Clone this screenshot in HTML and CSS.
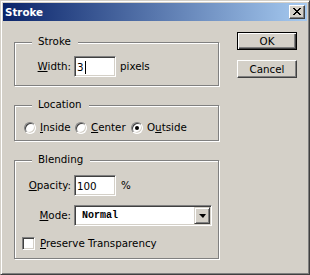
FILE: index.html
```html
<!DOCTYPE html>
<html>
<head>
<meta charset="utf-8">
<link rel="stylesheet" href="styles.css">
</head>
<body>
<div class="window">
  <div class="titlebar">
    <span class="title">Stroke</span>
    <span class="close">
      <svg width="8" height="7" viewBox="0 0 8 7" shape-rendering="crispEdges"><path d="M0 0h2v1h-2zM6 0h2v1h-2zM1 1h2v1h-2zM5 1h2v1h-2zM2 2h4v1h-4zM3 3h2v1h-2zM2 4h4v1h-4zM1 5h2v1h-2zM5 5h2v1h-2zM0 6h2v1h-2zM6 6h2v1h-2z" fill="#000"/></svg>
    </span>
  </div>
  <div class="body">
    <div class="groups">
      <div class="group g-stroke">
        <span class="legend">Stroke</span>
        <div class="row">
          <span class="lbl"><u>W</u>idth:</span>
          <span class="field">3<span class="caret"></span></span>
          <span class="unit">pixels</span>
        </div>
      </div>
      <div class="group g-location">
        <span class="legend">Location</span>
        <div class="radios">
          <span class="opt"><span class="radio"></span><span><u>I</u>nside</span></span>
          <span class="opt"><span class="radio"></span><span><u>C</u>enter</span></span>
          <span class="opt"><span class="radio on"></span><span>O<u>u</u>tside</span></span>
        </div>
      </div>
      <div class="group g-blend">
        <span class="legend">Blending</span>
        <div class="row">
          <span class="lbl"><u>O</u>pacity:</span>
          <span class="field">100</span>
          <span class="unit pct">%</span>
        </div>
        <div class="row row-mode">
          <span class="lbl"><u>M</u>ode:</span>
          <span class="select">
            <span class="sel-text">Normal</span>
            <span class="sel-btn"><span class="arrow"></span></span>
          </span>
        </div>
        <div class="check-row">
          <span class="check"></span>
          <span><u>P</u>reserve Transparency</span>
        </div>
      </div>
    </div>
    <div class="buttons">
      <div class="btn btn-default">OK</div>
      <div class="btn btn-cancel">Cancel</div>
    </div>
  </div>
</div>
</body>
</html>
```

FILE: styles.css
```css
html, body {
  margin: 0;
  padding: 0;
  background: #d4d0c8;
}
body {
  font-family: "DejaVu Sans", "Liberation Sans", sans-serif;
  font-size: 10.3px;
  color: #000;
}
.window {
  box-sizing: border-box;
  width: 310px;
  height: 275px;
  background: #d4d0c8;
  border: 1px solid;
  border-color: #d4d0c8 #404040 #404040 #d4d0c8;
  box-shadow: inset 1px 1px 0 #fff, inset -1px -1px 0 #808080;
  padding: 2px;
}
.titlebar {
  height: 18px;
  display: flex;
  align-items: center;
  padding-left: 2px;
  background: linear-gradient(to right, #0a246a, #a6caf0);
}
.title {
  color: #fff;
  font-weight: bold;
  font-size: 10.3px;
  line-height: 13px;
}
.close {
  margin-left: auto;
  margin-right: 2px;
  box-sizing: border-box;
  width: 16px;
  height: 14px;
  background: #d4d0c8;
  border: 1px solid;
  border-color: #fff #404040 #404040 #fff;
  box-shadow: inset -1px -1px 0 #808080;
  display: flex;
  align-items: center;
  justify-content: center;
  padding: 0 1px 1px 0;
}
.close svg { display: block; }
.body {
  display: flex;
  padding-left: 11px;
}
.groups {
  width: 205px;
  padding-top: 21px;
}
.group {
  position: relative;
  box-sizing: border-box;
  border: 1px solid #808080;
  box-shadow: inset 1px 1px 0 #fff, 1px 1px 0 #fff;
}
.legend {
  position: absolute;
  top: -8px;
  left: 17px;
  padding: 0 7px 0 6px;
  background: #d4d0c8;
  line-height: 13px;
}
.g-stroke {
  height: 44px;
  padding-top: 13px;
}
.g-location {
  margin-top: 19px;
  height: 36px;
  padding: 15px 0 0 9px;
}
.g-blend {
  margin-top: 19px;
  height: 99px;
  padding-top: 14px;
}
.row {
  display: flex;
  align-items: center;
  height: 21px;
}
.row-mode { margin-top: 9px; }
.lbl {
  width: 53px;
  margin-left: 3px;
  margin-right: 3px;
  text-align: right;
  line-height: 13px;
}
.field {
  box-sizing: border-box;
  width: 42px;
  height: 21px;
  background: #fff;
  border: 1px solid;
  border-color: #808080 #fff #fff #808080;
  box-shadow: inset 1px 1px 0 #404040, inset -1px -1px 0 #d4d0c8;
  padding: 1px 0 0 2px;
  display: flex;
  align-items: center;
  line-height: 13px;
}
.caret {
  display: inline-block;
  width: 1px;
  height: 13px;
  background: #000;
  margin-left: 1px;
}
.unit { margin-left: 4px; line-height: 13px; }
.pct { margin-left: 5px; }
.radios {
  display: grid;
  grid-template-columns: 51px 56px auto;
  height: 12px;
  align-items: center;
}
.opt {
  display: flex;
  align-items: center;
  line-height: 13px;
}
.radio {
  box-sizing: border-box;
  width: 12px;
  height: 12px;
  border-radius: 50%;
  background: #fff;
  border: 1px solid;
  border-color: #808080 #fff #fff #808080;
  box-shadow: inset 1px 1px 0 #404040, inset -1px -1px 0 #d4d0c8;
  margin-right: 4px;
  display: flex;
  align-items: center;
  justify-content: center;
  flex: none;
}
.radio.on::after {
  content: "";
  width: 4px;
  height: 4px;
  border-radius: 50%;
  background: #000;
}
.select {
  box-sizing: border-box;
  width: 138px;
  height: 21px;
  background: #fff;
  border: 1px solid;
  border-color: #808080 #fff #fff #808080;
  box-shadow: inset 1px 1px 0 #404040, inset -1px -1px 0 #d4d0c8;
  padding: 1px;
  display: flex;
  align-items: stretch;
}
.sel-text {
  flex: 1;
  display: flex;
  align-items: center;
  padding-left: 6px;
  font-family: "Liberation Mono", monospace;
  font-size: 10px;
  font-weight: bold;
}
.sel-btn {
  box-sizing: border-box;
  width: 16px;
  background: #d4d0c8;
  border: 1px solid;
  border-color: #d4d0c8 #404040 #404040 #d4d0c8;
  box-shadow: inset 1px 1px 0 #fff, inset -1px -1px 0 #808080;
  display: flex;
  align-items: center;
  justify-content: center;
}
.arrow {
  width: 0;
  height: 0;
  border-left: 4px solid transparent;
  border-right: 3px solid transparent;
  border-top: 4px solid #000;
  margin-left: 0;
}
.check-row {
  display: flex;
  align-items: center;
  height: 13px;
  margin-top: 11px;
  padding-left: 7px;
  line-height: 13px;
}
.check {
  box-sizing: border-box;
  width: 13px;
  height: 13px;
  background: #fff;
  border: 1px solid;
  border-color: #808080 #fff #fff #808080;
  box-shadow: inset 1px 1px 0 #404040, inset -1px -1px 0 #d4d0c8;
  margin-right: 5px;
}
.buttons {
  margin-left: 18px;
  padding-top: 11px;
  display: flex;
  flex-direction: column;
}
.btn {
  box-sizing: border-box;
  width: 60px;
  height: 18px;
  display: flex;
  align-items: center;
  justify-content: center;
  line-height: 13px;
}
.btn-default {
  border: 1px solid #000;
  box-shadow: inset 1px 1px 0 #fff, inset -1px -1px 0 #404040, inset -2px -2px 0 #808080;
}
.btn-cancel {
  margin-top: 10px;
  border: 1px solid;
  border-color: #fff #404040 #404040 #fff;
  box-shadow: inset -1px -1px 0 #808080;
}
```
